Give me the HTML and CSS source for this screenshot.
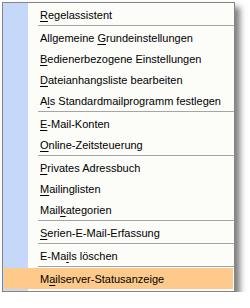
FILE: index.html
```html
<!DOCTYPE html>
<html lang="de">
<head>
    <meta charset="UTF-8">
    <title>Extras-Menü</title>
    <link rel="stylesheet" href="styles.css">
</head>
<body>
    <div class="menu">
        <div class="item"><u>R</u>egelassistent</div>
        <div class="sep"></div>
        <div class="item">Allgemeine <u>G</u>rundeinstellungen</div>
        <div class="item"><u>B</u>edienerbezogene Einstellungen</div>
        <div class="item"><u>D</u>ateianhangsliste bearbeiten</div>
        <div class="item">A<u>l</u>s Standardmailprogramm festlegen</div>
        <div class="sep"></div>
        <div class="item"><u>E</u>-Mail-Konten</div>
        <div class="item"><u>O</u>nline-Zeitsteuerung</div>
        <div class="sep"></div>
        <div class="item"><u>P</u>rivates Adressbuch</div>
        <div class="item"><u>M</u>ailinglisten</div>
        <div class="item">Mail<u>k</u>ategorien</div>
        <div class="sep"></div>
        <div class="item"><u>S</u>erien-E-Mail-Erfassung</div>
        <div class="sep"></div>
        <div class="item">E-Ma<u>i</u>ls löschen</div>
        <div class="sep"></div>
        <div class="item active">M<u>a</u>ilserver-Statusanzeige</div>
    </div>
</body>
</html>
```

FILE: styles.css
```css
body {
    margin: 0;
    padding: 2px 0 0 2px;
    background: #fff;
    font-family: "Liberation Sans", Arial, sans-serif;
    font-size: 11px;
    color: #000;
}
.menu {
    width: 231px;
    padding: 1px 0 2px 0;
    border: 1px solid #858585;
    background: linear-gradient(to right, #c5d8fa 0 25px, #fcfcf9 25px);
    box-shadow: 5px 5px 6px rgba(0,0,0,0.5);
}
.item {
    height: 21px;
    line-height: 23px;
    padding-left: 37px;
    white-space: nowrap;
}
.item u {
    text-decoration-thickness: 1px;
    text-underline-offset: 2px;
}
.item.active {
    margin: 0 1px;
    padding-left: 36px;
    background: #fdca8b;
}
.sep {
    height: 1px;
    margin: 0 0 1px 35px;
    background: #a5a5a5;
}
```
